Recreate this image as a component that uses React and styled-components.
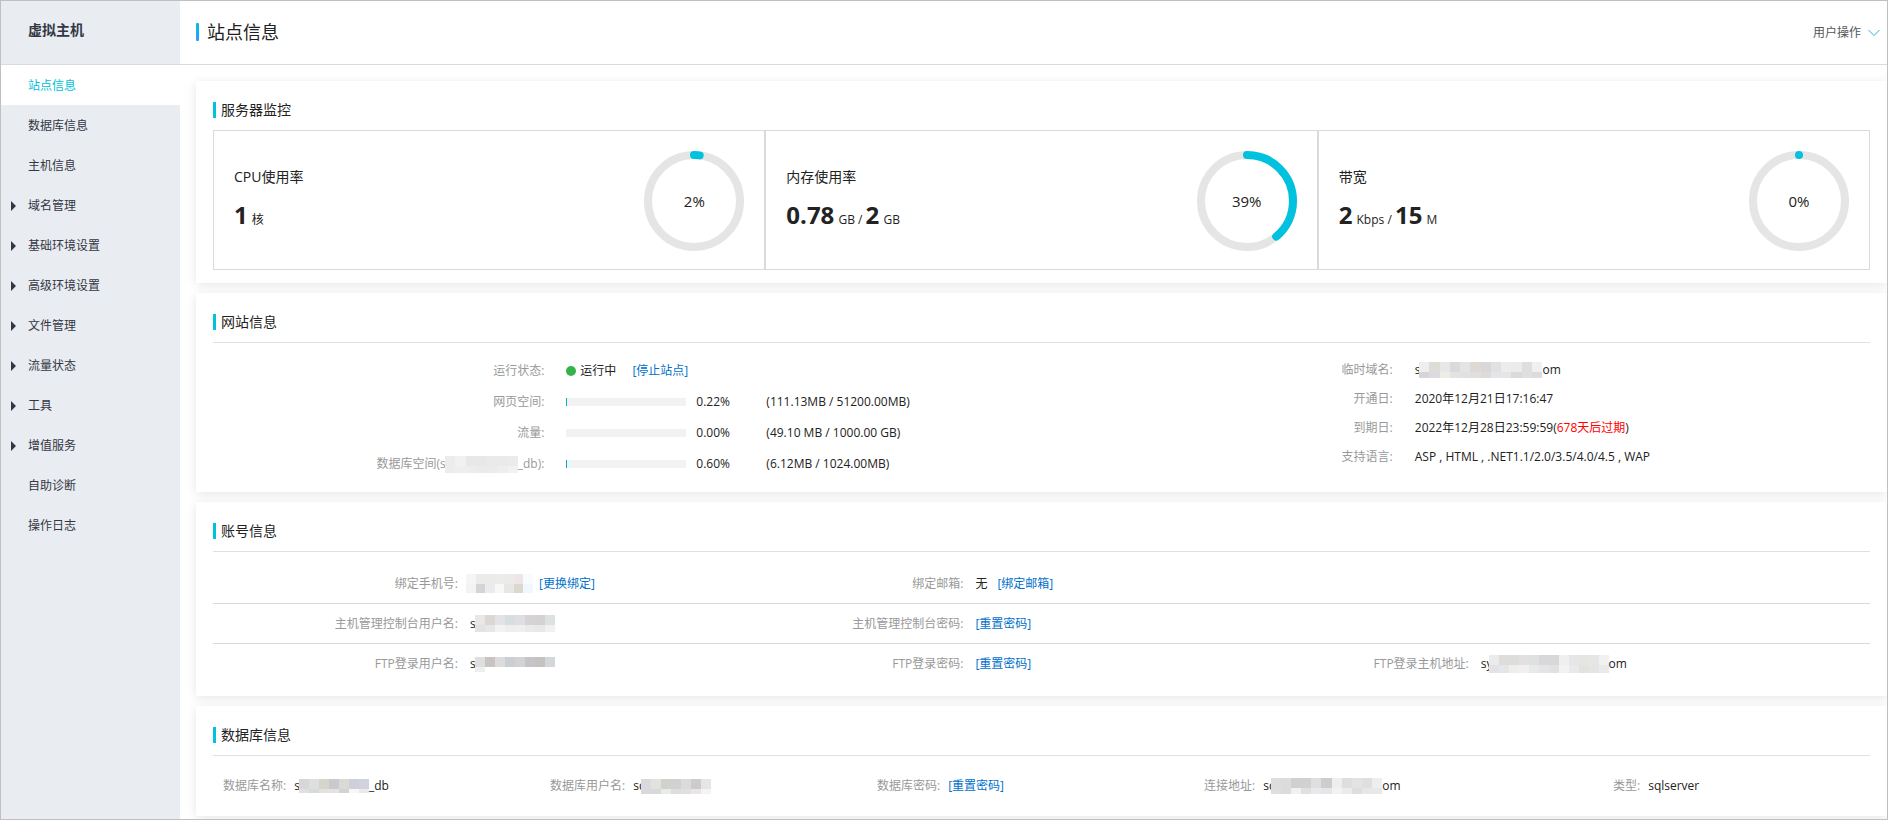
import React from "react";
import styled, { createGlobalStyle } from "styled-components";

const GlobalStyle = createGlobalStyle`
  *, *::before, *::after { box-sizing: border-box; }
  body {
    margin: 0;
    background: #fff;
    color: #222;
    font: 12px/20px "Open Sans", "Noto Sans CJK SC", sans-serif;
  }
  h1, h2, h3, p, ul, dl, dd { margin: 0; padding: 0; }
  ul { list-style: none; }
`;

const Page = styled.div`
  display: grid;
  grid-template-columns: 179px minmax(0, 1fr);
  grid-template-rows: 64px 1fr;
  min-height: 100vh;
  border: 1px solid #c0c0c0;
  overflow: hidden;
`;

const Brand = styled.div`
  padding: 19px 27px;
  background: #e9ecf1;
  border-bottom: 1px solid #d9dadc;
  color: #333744;
  font-size: 14px;
  font-weight: 700;
`;

const Header = styled.header`
  display: flex;
  align-items: center;
  justify-content: space-between;
  padding: 0 7px 0 16px;
  border-bottom: 1px solid #d9dadc;
`;

const PageTitle = styled.h1`
  display: flex;
  align-items: center;
  gap: 8px;
  padding-bottom: 2px;
  font-size: 18px;
  line-height: 24px;
  font-weight: 400;

  &::before {
    content: "";
    width: 3px;
    height: 18px;
    border-radius: 1px;
    background: linear-gradient(#00c1de, #3399ff);
  }
`;

const UserMenu = styled.button`
  display: flex;
  align-items: center;
  gap: 7px;
  padding: 0;
  border: 0;
  background: none;
  color: #555;
  font: inherit;
  cursor: pointer;
`;

const Sidebar = styled.nav`
  background: #e9ecf1;
`;

const NavLink = styled.a`
  display: flex;
  align-items: center;
  height: 40px;
  padding: 2px 0 0 10px;
  background: ${(p) => (p.$active ? "#fff" : "transparent")};
  color: ${(p) => (p.$active ? "#00c1de" : "#333744")};
  text-decoration: none;
`;

const Caret = styled.span`
  width: 5px;
  margin-right: 12px;
  border: 5px solid transparent;
  border-right: 0;
  border-left-color: ${(p) => (p.$shown ? "#333744" : "transparent")};
`;

const Main = styled.main`
  display: flex;
  flex-direction: column;
  gap: 10px;
  padding: 16px 0 3px 16px;
`;

const CardBox = styled.section`
  padding: 21px 17px ${(p) => p.$bottom}px;
  background: #fff;
  box-shadow: 0 2px 10px rgba(0, 0, 0, 0.1);
`;

const CardTitle = styled.h2`
  display: flex;
  align-items: center;
  gap: 5px;
  height: 16px;
  margin-bottom: 12px;
  font-size: 14px;
  font-weight: 400;

  &::before {
    content: "";
    width: 3px;
    height: 16px;
    background: #00c1de;
  }
`;

const Ruled = styled.div`
  border-top: 1px solid #e0e0e0;
`;

const Gauges = styled.div`
  display: grid;
  grid-template-columns: repeat(3, minmax(0, 1fr));
`;

const Gauge = styled.div`
  display: flex;
  align-items: center;
  justify-content: space-between;
  height: 140px;
  padding: 2px 20px 0;
  border: 1px solid #d9dadc;
`;

const GaugeName = styled.h3`
  font-size: 14px;
  line-height: 20px;
  font-weight: 400;
`;

const GaugeValue = styled.p`
  margin-top: 12px;
  line-height: 32px;

  b {
    margin-right: 1px;
    font-size: 24px;
  }
`;

const Dial = styled.div`
  display: grid;
  place-items: center;
  width: 100px;
  height: 100px;
  font-size: 15px;

  > * { grid-area: 1 / 1; }
`;

const SiteInfo = styled(Ruled)`
  display: grid;
  grid-template-columns: 3fr 2fr;
  align-items: start;
  padding-top: 12px;
`;

const InfoList = styled.dl`
  display: grid;
  grid-template-columns: ${(p) => p.$label} 1fr;
  grid-auto-rows: ${(p) => p.$row}px;
  align-items: center;
  column-gap: 22px;
`;

const Label = styled.dt`
  color: #999;
  text-align: right;
  white-space: nowrap;
`;

const Value = styled.dd`
  display: flex;
  align-items: center;
  white-space: nowrap;
`;

const Dot = styled.span`
  width: 10px;
  height: 10px;
  margin-right: 4px;
  border-radius: 50%;
  background: #35b34a;
`;

const Action = styled.a`
  margin-left: ${(p) => p.$gap || 0}px;
  color: #0070cc;
  text-decoration: none;
`;

const Track = styled.div`
  width: 120px;
  height: 8px;
  background: #f2f2f2;
`;

const Fill = styled.div`
  height: 8px;
  background: #00b4d0;
`;

const Percent = styled.span`
  width: 70px;
  margin-left: 10px;
`;

const Expiry = styled.span`
  color: #f00;
`;

const AccountRows = styled(Ruled)`
  padding-top: 12px;
`;

const AccountRow = styled.dl`
  display: grid;
  grid-template-columns: repeat(3, 61fr) 17fr;
  height: 40px;

  &:not(:last-child) {
    border-bottom: 1px solid #d9dadc;
  }
`;

const AccountCell = styled.div`
  display: grid;
  grid-template-columns: 245px 1fr;
  align-items: center;
  column-gap: 12px;
`;

const DatabaseRow = styled.dl`
  display: grid;
  grid-template-columns: repeat(3, 327fr) 409fr 257fr;
  height: 60px;
  padding-left: 10px;
`;

const DatabaseCell = styled.div`
  display: flex;
  align-items: center;
  gap: 8px;
`;

const Blocks = styled.svg`
  flex: none;
  display: inline-block;
  vertical-align: middle;
  margin-left: ${(p) => p.$overlap || 0}px;
`;

function Mosaic({ width, top, bottom, rows, overlap }) {
  const cell = width / rows[0].length;
  return (
    <Blocks
      width={width}
      height={top + bottom}
      $overlap={overlap}
      shapeRendering="crispEdges"
      aria-hidden="true"
    >
      {rows.map((row, r) =>
        row.map((tone, i) => (
          <rect
            key={`${r}-${i}`}
            x={i * cell}
            y={r === 0 ? 0 : top}
            width={cell}
            height={r === 0 ? top : bottom}
            fill={`#${tone}`}
          />
        ))
      )}
    </Blocks>
  );
}

const tones = (text) => text.split(" ");

const MASKS = {
  space: {
    width: 73, top: 10, bottom: 7,
    rows: [
      tones("ececec f1f1f1 e8e8e8 e8e8e8 eaeaea eaeaea ebebeb"),
      tones("edecec eeeeee ededed ebebeb ebebeb eeeeee f2f2f2"),
    ],
  },
  domain: {
    width: 123, top: 10, bottom: 6,
    rows: [
      tones("eceeef dfdcd7 e6e7e6 d8dadc e5e3e3 dfd9d6 d8d8da e2e1e2 ececec ebebeb e0dedb eef0f3"),
      tones("d5d5d7 dcdadd edede8 e2e3e3 e2e0e2 e0e0e1 dcdbda e4e5e8 e4e5e5 dad9dd dddfe0 dedcdb"),
    ],
  },
  phone: {
    width: 67, top: 10, bottom: 9,
    rows: [
      tones("f5f5f5 ebebea ebebea ebeceb ebebeb ece7e4 f8fcff"),
      tones("f3f3f3 d6d4d2 ebebed f8f8f8 e6e8e4 dcd8ce eff8ff"),
    ],
  },
  consoleUser: {
    width: 80, top: 10, bottom: 7,
    rows: [
      tones("e9e8e7 dcd7d4 e3e2e5 d8dde0 dfdee0 d5d3d5 d4d2d2 dce1e1"),
      tones("e4e3e3 e8e6e6 f4f3f4 eceef0 eeeff1 ebeaea e9e8e9 f1f1f2"),
    ],
  },
  ftpUser: {
    width: 80, top: 10, bottom: 5,
    rows: [
      tones("e0dfdf c9c4c1 dcdbde cbced2 d3d3d5 c6c4c7 c5c2c0 d2d7d9"),
      tones("eeeeee"),
    ],
  },
  ftpHost: {
    width: 120, top: 10, bottom: 8,
    rows: [
      tones("ebebeb dddddc dddddc e2e1e2 dfe1e0 dad7da d9d7d9 eeefee e6e6e7 e6e5e3 e6e6e4 f0f2f1"),
      tones("e2e2e7 e4e6e9 f0eeec f1eff0 e8e9eb e5e5e5 e2e1e1 f2f2f2 e9e9ea e2e2df e5e5e8 eaeae8"),
    ],
  },
  dbName: {
    width: 70, top: 10, bottom: 4,
    rows: [
      tones("d8d6d8 dce0df d7d4ce c9c9ce dcd9d3 ced0d9 d2d3da"),
      tones("e2dfe0 d6dadd e2e2e0 e4e3e2 d2d3d7 f8f7f5 eaeaec"),
    ],
  },
  dbUser: {
    width: 70, top: 10, bottom: 5,
    rows: [
      tones("d9dade e1e3e1 d0d2ce d0d2ce dbdadd cdcbce e5e7e6"),
      tones("d9d8dc d9d8dc e9ebe9 dfdce0 e1e0e0 eae6e8 f3f4f3"),
    ],
  },
  host: {
    width: 111, top: 10, bottom: 6,
    rows: [
      tones("dddcdf dddcda d2cfd3 d1d2cf dde0dd ccccd1 eeeeee dedede e3e3e2 dfdee0 eceeef"),
      tones("dfdfe0 dadddb f2f0f3 dee1df e9e9eb e6e6e8 f2f2f2 eaebea dededc e7e7e9 e7e8e7"),
    ],
  },
};

function Ring({ percent }) {
  const r = 46;
  const length = 2 * Math.PI * r;
  return (
    <Dial>
      <svg width="100" height="100" viewBox="0 0 100 100" fill="none" strokeWidth="8" aria-hidden="true">
        <circle cx="50" cy="50" r={r} stroke="#e5e5e5" />
        <circle
          cx="50"
          cy="50"
          r={r}
          stroke="#00c1de"
          strokeLinecap="round"
          strokeDasharray={`${Math.max((percent / 100) * length, 0.01)} ${length}`}
          transform="rotate(-90 50 50)"
        />
      </svg>
      <span>{percent}%</span>
    </Dial>
  );
}

function Card({ title, bottom, children }) {
  return (
    <CardBox $bottom={bottom}>
      <CardTitle>{title}</CardTitle>
      {children}
    </CardBox>
  );
}

function Usage({ percent, detail }) {
  return (
    <Value>
      <Track>
        <Fill style={{ width: percent > 0 ? Math.max(1, Math.round(percent * 1.2)) : 0 }} />
      </Track>
      <Percent>{percent.toFixed(2)}%</Percent>
      {detail}
    </Value>
  );
}

function AccountField({ label, children }) {
  return (
    <AccountCell>
      <Label>{label}:</Label>
      <Value>{children}</Value>
    </AccountCell>
  );
}

function DatabaseField({ label, children }) {
  return (
    <DatabaseCell>
      <Label>{label}:</Label>
      <Value>{children}</Value>
    </DatabaseCell>
  );
}

const NAV = [
  { text: "站点信息", active: true },
  { text: "数据库信息" },
  { text: "主机信息" },
  { text: "域名管理", group: true },
  { text: "基础环境设置", group: true },
  { text: "高级环境设置", group: true },
  { text: "文件管理", group: true },
  { text: "流量状态", group: true },
  { text: "工具", group: true },
  { text: "增值服务", group: true },
  { text: "自助诊断" },
  { text: "操作日志" },
];

export default function App() {
  return (
    <>
      <GlobalStyle />
      <Page>
        <Brand>虚拟主机</Brand>
        <Header>
          <PageTitle>站点信息</PageTitle>
          <UserMenu type="button">
            用户操作
            <svg width="12" height="8" viewBox="0 0 12 8" fill="none" stroke="#2fb0d8" aria-hidden="true">
              <path d="M.5 1 6 6.5 11.500 1" />
            </svg>
          </UserMenu>
        </Header>

        <Sidebar>
          <ul>
            {NAV.map((item) => (
              <li key={item.text}>
                <NavLink href="#" $active={item.active}>
                  <Caret $shown={item.group} />
                  {item.text}
                </NavLink>
              </li>
            ))}
          </ul>
        </Sidebar>

        <Main>
          <Card title="服务器监控" bottom={13}>
            <Gauges>
              <Gauge>
                <div>
                  <GaugeName>CPU使用率</GaugeName>
                  <GaugeValue><b>1</b> 核</GaugeValue>
                </div>
                <Ring percent={2} />
              </Gauge>
              <Gauge>
                <div>
                  <GaugeName>内存使用率</GaugeName>
                  <GaugeValue><b>0.78</b> GB / <b>2</b> GB</GaugeValue>
                </div>
                <Ring percent={39} />
              </Gauge>
              <Gauge>
                <div>
                  <GaugeName>带宽</GaugeName>
                  <GaugeValue><b>2</b> Kbps / <b>15</b> M</GaugeValue>
                </div>
                <Ring percent={0} />
              </Gauge>
            </Gauges>
          </Card>

          <Card title="网站信息" bottom={13}>
            <SiteInfo>
              <InfoList $label="33.33%" $row={31}>
                <Label>运行状态:</Label>
                <Value>
                  <Dot />
                  运行中
                  <Action href="#" $gap={16}>[停止站点]</Action>
                </Value>
                <Label>网页空间:</Label>
                <Usage percent={0.22} detail="(111.13MB / 51200.00MB)" />
                <Label>流量:</Label>
                <Usage percent={0} detail="(49.10 MB / 1000.00 GB)" />
                <Label>数据库空间(s<Mosaic {...MASKS.space} overlap={-1} />_db):</Label>
                <Usage percent={0.6} detail="(6.12MB / 1024.00MB)" />
              </InfoList>
              <InfoList $label="28%" $row={29}>
                <Label>临时域名:</Label>
                <Value>s<Mosaic {...MASKS.domain} overlap={-1} />om</Value>
                <Label>开通日:</Label>
                <Value>2020年12月21日17:16:47</Value>
                <Label>到期日:</Label>
                <Value>2022年12月28日23:59:59(<Expiry>678天后过期</Expiry>)</Value>
                <Label>支持语言:</Label>
                <Value>ASP , HTML , .NET1.1/2.0/3.5/4.0/4.5 , WAP</Value>
              </InfoList>
            </SiteInfo>
          </Card>

          <Card title="账号信息" bottom={12}>
            <AccountRows>
              <AccountRow>
                <AccountField label="绑定手机号">
                  <Mosaic {...MASKS.phone} overlap={-4} />
                  <Action href="#" $gap={6}>[更换绑定]</Action>
                </AccountField>
                <AccountField label="绑定邮箱">
                  无
                  <Action href="#" $gap={10}>[绑定邮箱]</Action>
                </AccountField>
              </AccountRow>
              <AccountRow>
                <AccountField label="主机管理控制台用户名">
                  s<Mosaic {...MASKS.consoleUser} overlap={-1} />
                </AccountField>
                <AccountField label="主机管理控制台密码">
                  <Action href="#">[重置密码]</Action>
                </AccountField>
              </AccountRow>
              <AccountRow>
                <AccountField label="FTP登录用户名">
                  s<Mosaic {...MASKS.ftpUser} overlap={-1} />
                </AccountField>
                <AccountField label="FTP登录密码">
                  <Action href="#">[重置密码]</Action>
                </AccountField>
                <AccountField label="FTP登录主机地址">
                  sy<Mosaic {...MASKS.ftpHost} overlap={-4} />om
                </AccountField>
              </AccountRow>
            </AccountRows>
          </Card>

          <Card title="数据库信息" bottom={0}>
            <Ruled>
              <DatabaseRow>
                <DatabaseField label="数据库名称">
                  s<Mosaic {...MASKS.dbName} overlap={-1} />_db
                </DatabaseField>
                <DatabaseField label="数据库用户名">
                  sq<Mosaic {...MASKS.dbUser} overlap={-5} />
                </DatabaseField>
                <DatabaseField label="数据库密码">
                  <Action href="#">[重置密码]</Action>
                </DatabaseField>
                <DatabaseField label="连接地址">
                  sq<Mosaic {...MASKS.host} overlap={-5} />om
                </DatabaseField>
                <DatabaseField label="类型">sqlserver</DatabaseField>
              </DatabaseRow>
            </Ruled>
          </Card>
        </Main>
      </Page>
    </>
  );
}
